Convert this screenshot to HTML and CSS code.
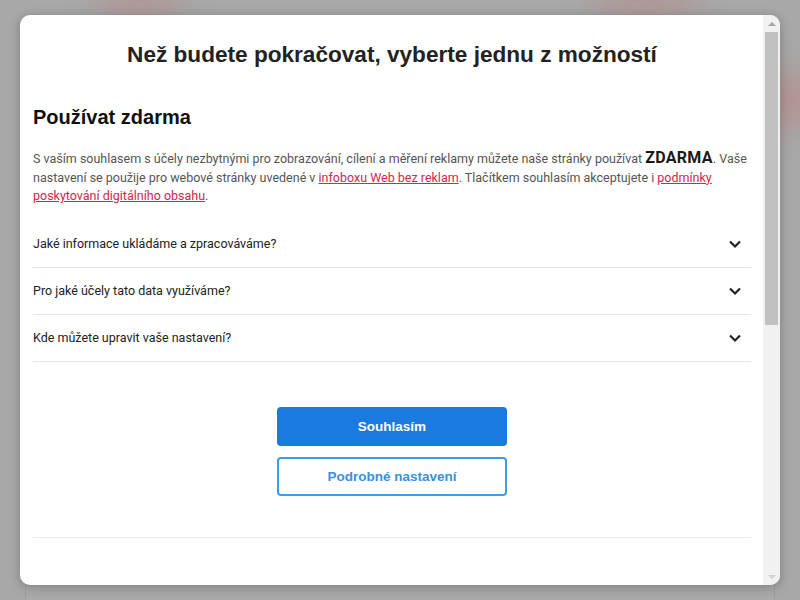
FILE: index.html
```html
<!DOCTYPE html>
<html lang="cs">
<head>
    <meta charset="UTF-8">
    <meta name="viewport" content="width=device-width, initial-scale=1.0">
    <title>Souhlas s cookies</title>
    <link rel="stylesheet" href="styles.css">
</head>
<body>
    <div class="backdrop">
        <div class="blur blur-left"></div>
        <div class="blur blur-right"></div>
        <div class="blur blur-side"></div>
        <div class="page-card"></div>
    </div>

    <div class="modal">
        <div class="modal-body">
            <h1 class="title">Než budete pokračovat, vyberte jednu z možností</h1>

            <h2 class="subtitle">Používat zdarma</h2>
            <p class="intro">
                S vaším souhlasem s účely nezbytnými pro zobrazování, cílení a měření reklamy můžete naše stránky používat <strong class="free">ZDARMA</strong>. Vaše nastavení se použije pro webové stránky uvedené v <a href="#">infoboxu Web bez reklam</a>. Tlačítkem souhlasím akceptujete i <a href="#">podmínky poskytování digitálního obsahu</a>.
            </p>

            <div class="faq">
                <div class="faq-item">
                    <span>Jaké informace ukládáme a zpracováváme?</span>
                    <svg class="chevron" width="14" height="14" viewBox="0 0 14 14"><path d="M2 4.5l5 5 5-5" fill="none" stroke="#222" stroke-width="2.2"/></svg>
                </div>
                <div class="faq-item">
                    <span>Pro jaké účely tato data využíváme?</span>
                    <svg class="chevron" width="14" height="14" viewBox="0 0 14 14"><path d="M2 4.5l5 5 5-5" fill="none" stroke="#222" stroke-width="2.2"/></svg>
                </div>
                <div class="faq-item">
                    <span>Kde můžete upravit vaše nastavení?</span>
                    <svg class="chevron" width="14" height="14" viewBox="0 0 14 14"><path d="M2 4.5l5 5 5-5" fill="none" stroke="#222" stroke-width="2.2"/></svg>
                </div>
            </div>

            <div class="actions">
                <button class="btn btn-primary">Souhlasím</button>
                <button class="btn btn-outline">Podrobné nastavení</button>
            </div>

            <div class="footer-line"></div>
        </div>

        <div class="scrollbar">
            <div class="arrow arrow-up"></div>
            <div class="thumb"></div>
            <div class="arrow arrow-down"></div>
        </div>
    </div>
</body>
</html>
```

FILE: styles.css
```css
* { box-sizing: border-box; }

html, body {
    margin: 0;
    height: 100%;
}

body {
    background: #a8a8a8;
    font-family: "Liberation Sans", Arial, sans-serif;
    overflow: hidden;
    position: relative;
}

.backdrop {
    position: absolute;
    inset: 0;
    overflow: hidden;
}
.blur {
    position: absolute;
    border-radius: 50%;
    filter: blur(14px);
    background: rgba(190, 120, 120, 0.35);
}
.blur-left { left: 95px; top: -20px; width: 90px; height: 40px; }
.blur-right { left: 590px; top: -20px; width: 110px; height: 40px; }
.blur-side { left: 770px; top: 70px; width: 40px; height: 60px; background: rgba(200, 110, 110, 0.4); }
.page-card {
    position: absolute;
    left: 25px;
    right: 25px;
    top: 578px;
    height: 40px;
    border: 1px solid #9d9d9d;
    background: #a9a9a9;
}

.modal {
    position: absolute;
    left: 20px;
    top: 15px;
    width: 760px;
    height: 570px;
    background: #fff;
    border-radius: 10px;
    box-shadow: 0 2px 12px rgba(0, 0, 0, 0.25);
    display: flex;
    overflow: hidden;
}

.modal-body {
    flex: 1;
    padding: 0 12px 0 13px;
}

.title {
    font-size: 22.6px;
    font-weight: bold;
    color: #222;
    text-align: center;
    margin: 25px 0 0;
    line-height: 30px;
}

.subtitle {
    font-size: 20px;
    font-weight: bold;
    color: #111;
    margin: 34px 0 0;
    line-height: 26px;
}

.intro {
    font-family: Roboto, "Liberation Sans", sans-serif;
    font-size: 12.5px;
    line-height: 18.5px;
    color: #555;
    margin: 20px 0 0;
}
.intro a {
    color: #d0264f;
    text-decoration: underline;
}
.free {
    font-size: 16px;
    line-height: 1;
    color: #1a1a1a;
    font-weight: bold;
    letter-spacing: 0.3px;
}

.faq {
    margin-top: 15px;
}
.faq-item {
    display: flex;
    justify-content: space-between;
    align-items: center;
    height: 47px;
    border-bottom: 1px solid #e6e6e6;
    font-family: Roboto, "Liberation Sans", sans-serif;
    font-size: 12.5px;
    color: #222;
    padding-right: 9px;
}

.actions {
    display: flex;
    flex-direction: column;
    align-items: center;
    gap: 11px;
    margin-top: 45px;
}
.btn {
    width: 230px;
    height: 39px;
    border-radius: 4px;
    font-family: "Liberation Sans", Arial, sans-serif;
    font-size: 13.5px;
    font-weight: bold;
    cursor: pointer;
}
.btn-primary {
    background: #1a7ae0;
    border: none;
    color: #fff;
}
.btn-outline {
    background: #fff;
    border: 2px solid #3d9be8;
    color: #3a90dc;
}

.footer-line {
    margin-top: 41px;
    border-top: 1px solid #ececec;
}

.scrollbar {
    width: 17px;
    background: #f1f1f1;
    display: flex;
    flex-direction: column;
    align-items: center;
}
.arrow {
    width: 0;
    height: 0;
    border-left: 4px solid transparent;
    border-right: 4px solid transparent;
    margin: 7px 0 6px;
}
.arrow-up { border-bottom: 4px solid #a3a3a3; }
.arrow-down { border-top: 4px solid #d0d0d0; margin-top: auto; }
.thumb {
    width: 13px;
    height: 293px;
    background: #c1c1c1;
}
```
